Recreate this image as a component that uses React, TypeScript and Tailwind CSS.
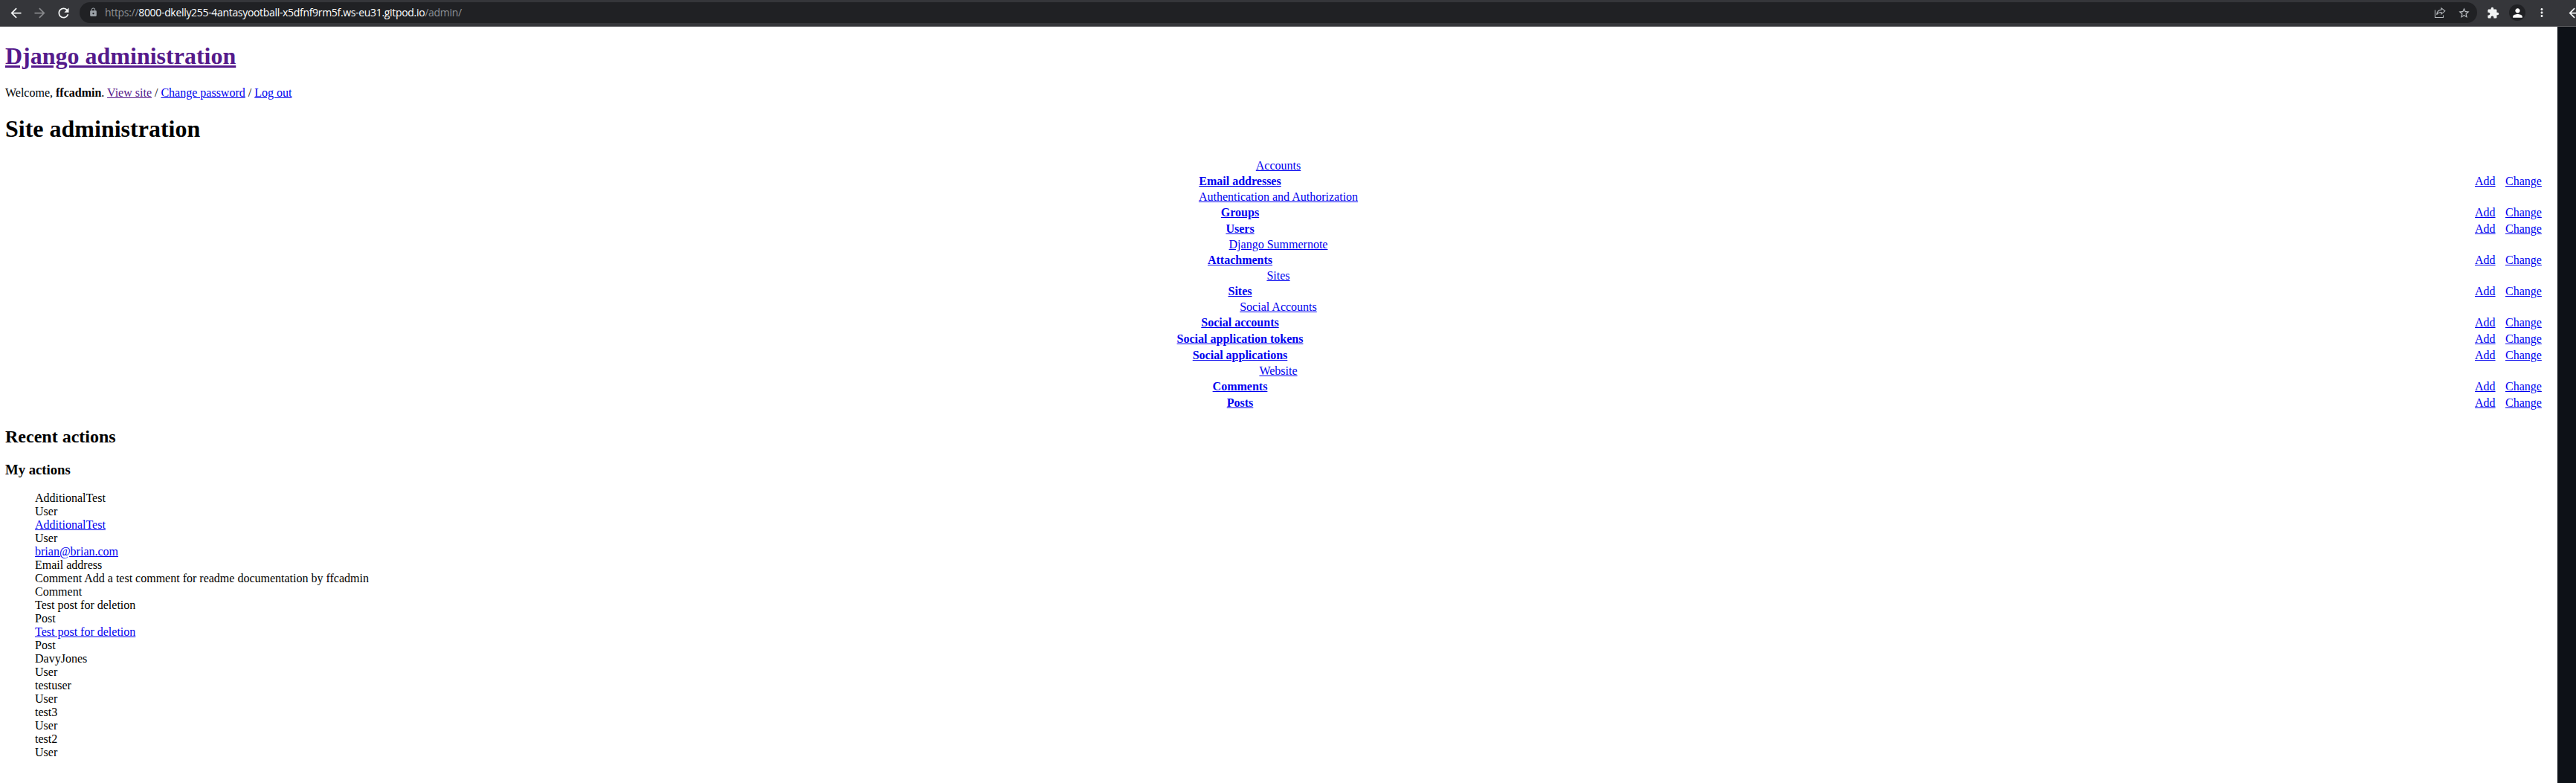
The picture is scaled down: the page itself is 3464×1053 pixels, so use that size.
import React from "react";
import { MdArrowBack, MdArrowForward, MdRefresh, MdLock, MdStarBorder, MdExtension, MdPerson, MdMoreVert } from "react-icons/md";

type Entry = { text: string; kind: string; link?: boolean };

const apps: { name: string; models: string[] }[] = [
  { name: "Accounts", models: ["Email addresses"] },
  { name: "Authentication and Authorization", models: ["Groups", "Users"] },
  { name: "Django Summernote", models: ["Attachments"] },
  { name: "Sites", models: ["Sites"] },
  { name: "Social Accounts", models: ["Social accounts", "Social application tokens", "Social applications"] },
  { name: "Website", models: ["Comments", "Posts"] },
];

const actions: Entry[] = [
  { text: "AdditionalTest", kind: "User" },
  { text: "AdditionalTest", kind: "User", link: true },
  { text: "brian@brian.com", kind: "Email address", link: true },
  { text: "Comment Add a test comment for readme documentation by ffcadmin", kind: "Comment" },
  { text: "Test post for deletion", kind: "Post" },
  { text: "Test post for deletion", kind: "Post", link: true },
  { text: "DavyJones", kind: "User" },
  { text: "testuser", kind: "User" },
  { text: "test3", kind: "User" },
  { text: "test2", kind: "User" },
];

function Link({ children, visited }: { children: React.ReactNode; visited?: boolean }) {
  return (
    <a href="#" className={visited ? "text-[#551a8b] underline" : "text-[#0000ee] underline"}>
      {children}
    </a>
  );
}

function ShareIcon() {
  return (
    <svg width="16" height="16" viewBox="0 0 16 16" fill="none" stroke="#b4b8bc" strokeWidth="1.1">
      <path d="M1.500 4.500v10h11v-3" />
      <path d="M10 1.800l4.800 4-4.800 4V7.500C7 7.500 5 8.500 3.700 10.800 4 7.300 6 4.500 10 4.100z" />
    </svg>
  );
}

function Toolbar() {
  return (
    <header className="flex h-9 items-start overflow-hidden border-b border-[#5b5c5f] bg-[#35363a] pt-[3px] text-[#f1f3f4]">
      <div className="flex h-7 w-[107px] shrink-0 items-center gap-[11px] pl-[10.5px]">
        <MdArrowBack size={21} />
        <MdArrowForward size={21} className="text-[#87888b]" />
        <MdRefresh size={21} />
      </div>
      <div className="flex h-7 w-[3224px] shrink-0 items-center rounded-full bg-[#202124] pr-[9px] pl-[11px]">
        <MdLock size={13} className="mb-px ml-px text-[#9aa0a6]" />
        <span className="mb-px ml-[9px] flex-1 font-['Open_Sans',sans-serif] text-sm tracking-[-0.32px] whitespace-nowrap text-[#8e9195]">
          https://<span className="text-white">8000-dkelly255-4antasyootball-x5dfnf9rm5f.ws-eu31.gitpod.io</span>/admin/
        </span>
        <div className="flex items-center gap-4 text-[#bdc1c6]">
          <ShareIcon />
          <MdStarBorder size={17} />
        </div>
      </div>
      <div className="flex h-7 shrink-0 items-center">
        <MdExtension size={17} className="ml-[13px]" />
        <span className="ml-[13px] flex size-[22px] items-center justify-center rounded-full bg-[#202124]">
          <MdPerson size={19} className="text-white" />
        </span>
        <MdMoreVert size={18} className="ml-[13px]" />
        <MdArrowBack size={21} className="ml-6" />
      </div>
    </header>
  );
}

function AppTable({ name, models }: { name: string; models: string[] }) {
  return (
    <section className="flex flex-col gap-0.5 pb-0.5">
      <div className="h-[18px] text-center">
        <Link>{name}</Link>
      </div>
      {models.map((m) => (
        <div key={m} className="flex h-5 items-center">
          <div className="flex-1 text-center font-bold">
            <Link>{m}</Link>
          </div>
          <div className="w-[41px]">
            <Link>Add</Link>
          </div>
          <div className="w-[62px]">
            <Link>Change</Link>
          </div>
        </div>
      ))}
    </section>
  );
}

export default function App() {
  return (
    <div className="flex h-[1053px] w-[3464px] flex-col overflow-hidden bg-white">
      <Toolbar />
      <div className="flex min-h-0 flex-1">
        <main className="flex-1 pt-[21px] pr-2 pl-[7px] font-['Liberation_Serif',serif] text-base leading-[18px] text-black">
          <h1 className="text-[32px] leading-[37px] font-bold">
            <a href="#" className="text-[#551a8b] underline decoration-[3px] underline-offset-2">
              Django administration
            </a>
          </h1>
          <div className="mt-[22px]">
            Welcome, <strong>ffcadmin</strong>. <Link visited>View site</Link> / <Link>Change password</Link> / <Link>Log out</Link>
          </div>
          <h1 className="mt-[21px] text-[32px] leading-[37px] font-bold">Site administration</h1>
          <div className="mt-[22px]">
            {apps.map((a) => (
              <AppTable key={a.name} name={a.name} models={a.models} />
            ))}
          </div>
          <h2 className="mt-5 text-2xl leading-[27px] font-bold">Recent actions</h2>
          <h3 className="mt-5 text-[18.72px] leading-[21px] font-bold">My actions</h3>
          <ul className="mt-[19px] pl-10">
            {actions.map((a, i) => (
              <li key={i}>
                {a.link ? <Link>{a.text}</Link> : a.text}
                <div>{a.kind}</div>
              </li>
            ))}
          </ul>
        </main>
        <aside className="w-[25px] bg-[#0d1117]" />
      </div>
    </div>
  );
}
